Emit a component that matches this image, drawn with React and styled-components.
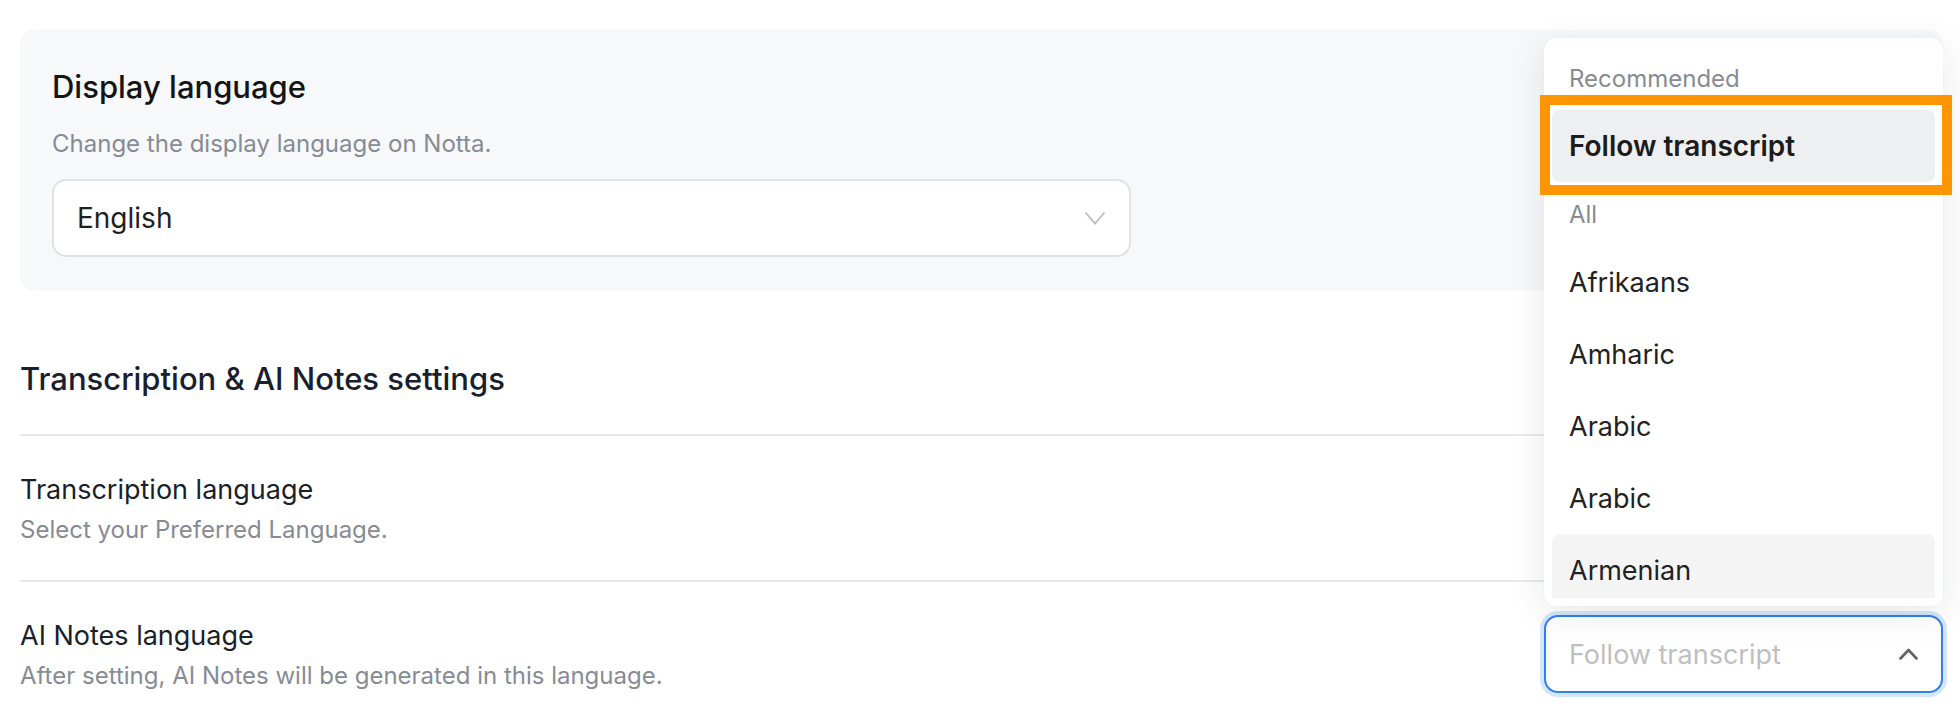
import React from "react"
import styled, { createGlobalStyle } from "styled-components"

const GlobalStyle = createGlobalStyle`
  html, body {
    margin: 0;
    padding: 0;
    background: #ffffff;
  }
  body {
    font-family: Inter, "Noto Sans", "Liberation Sans", sans-serif;
    -webkit-font-smoothing: antialiased;
  }
  * {
    box-sizing: border-box;
  }
`

const Page = styled.div`
  width: 1960px;
  height: 722px;
  padding: 30px 17px 0 20px;
  overflow: hidden;
`

const Card = styled.section`
  height: 260px;
  padding: 37px 32px 33px;
  background: #f7f8fa;
  border-radius: 14px;
`

const CardTitle = styled.h2`
  margin: 0;
  font-size: 31px;
  line-height: 40px;
  font-weight: 500;
  color: #141414;
`

const Hint = styled.p`
  margin: ${props => props.$spaced ? "21px 0 19px" : "6px 0 0"};
  font-size: 24px;
  line-height: 32px;
  color: #868b94;
`

const SelectBox = styled.div`
  position: relative;
  display: flex;
  align-items: center;
  justify-content: space-between;
  width: ${props => props.$width}px;
  height: 78px;
  padding: 0 23px;
  background: #ffffff;
  border: 2px solid ${props => props.$open ? "#2f80ed" : "#e1e2e5"};
  border-radius: 14px;
  box-shadow: ${props => props.$open ? "0 0 0 4px #d5e6fc" : "none"};
  font-size: 28px;
  color: #1f1f1f;
`

const Placeholder = styled.span`
  font-size: 27px;
  color: #bfbfbf;
`

const SectionTitle = styled.h2`
  margin: 69px 0 0;
  padding-bottom: 35px;
  border-bottom: 2px solid #e8e9ed;
  font-size: 31px;
  line-height: 40px;
  font-weight: 500;
  color: #18202e;
`

const Row = styled.div`
  display: flex;
  align-items: flex-start;
  justify-content: space-between;
  padding: 33px 0;
  border-bottom: 2px solid #e8e9ed;
`

const RowText = styled.div`
  padding-top: 3px;
`

const RowLabel = styled.div`
  font-size: 27px;
  line-height: 36px;
  color: #1a1f2b;
`

const SelectAnchor = styled.div`
  position: relative;
`

const Menu = styled.div`
  position: absolute;
  left: 0;
  right: 0;
  bottom: calc(100% + 9px);
  height: 568px;
  padding: 8px;
  background: #ffffff;
  border-radius: 12px;
  box-shadow: 0 8px 36px rgba(20, 25, 40, 0.1), 0 0 1px rgba(0, 0, 0, 0.1);
  z-index: 5;
`

const MenuList = styled.div`
  height: 100%;
  overflow: hidden;
`

const GroupLabel = styled.div`
  display: flex;
  align-items: center;
  height: 64px;
  padding-left: 17px;
  font-size: 24px;
  color: #868b94;
`

const Option = styled.div`
  display: flex;
  align-items: center;
  height: 72px;
  padding-left: 17px;
  border-radius: 8px;
  font-size: ${props => props.$selected ? 28 : 27}px;
  font-weight: ${props => props.$selected ? 600 : 400};
  color: ${props => props.$selected ? "#1c1c1c" : "#222222"};
  background: ${props =>
    props.$selected ? "#eeeff1" : props.$hover ? "#f4f4f5" : "transparent"};
`

const Highlight = styled.div`
  position: absolute;
  top: 57px;
  left: -4px;
  width: 412px;
  height: 100px;
  border: 10px solid #ff9500;
  pointer-events: none;
`

const ChevronDown = () => (
  <svg width="22" height="16" viewBox="0 0 22 16" fill="none">
    <path d="M1.5 2.5 L11 13.5 L20.5 2.5" stroke="#bcbcbc" strokeWidth="1.8" />
  </svg>
)

const ChevronUp = () => (
  <svg width="19" height="12" viewBox="0 0 19 12" fill="none">
    <path
      d="M1.5 10.5 L9.5 2 L17.5 10.5"
      stroke="#5f6368"
      strokeWidth="2.6"
      strokeLinecap="round"
      strokeLinejoin="round"
    />
  </svg>
)

const languages = ["Afrikaans", "Amharic", "Arabic", "Arabic", "Armenian"]

const App = () => {
  return (
    <Page>
      <GlobalStyle />
      <Card>
        <CardTitle>Display language</CardTitle>
        <Hint $spaced>Change the display language on Notta.</Hint>
        <SelectBox $width={1079}>
          English
          <ChevronDown />
        </SelectBox>
      </Card>

      <SectionTitle>Transcription &amp; AI Notes settings</SectionTitle>

      <Row>
        <RowText>
          <RowLabel>Transcription language</RowLabel>
          <Hint>Select your Preferred Language.</Hint>
        </RowText>
        {/* covered by the open menu below */}
        <SelectBox $width={399}>
          <span />
          <ChevronDown />
        </SelectBox>
      </Row>

      <Row>
        <RowText>
          <RowLabel>AI Notes language</RowLabel>
          <Hint>After setting, AI Notes will be generated in this language.</Hint>
        </RowText>
        <SelectAnchor>
          <Menu>
            <MenuList>
              <GroupLabel>Recommended</GroupLabel>
              <Option $selected>Follow transcript</Option>
              <GroupLabel>All</GroupLabel>
              {languages.map((name, i) => (
                <Option key={i} $hover={name === "Armenian"}>
                  {name}
                </Option>
              ))}
            </MenuList>
            <Highlight />
          </Menu>
          <SelectBox $width={399} $open>
            <Placeholder>Follow transcript</Placeholder>
            <ChevronUp />
          </SelectBox>
        </SelectAnchor>
      </Row>
    </Page>
  )
}

export default App
